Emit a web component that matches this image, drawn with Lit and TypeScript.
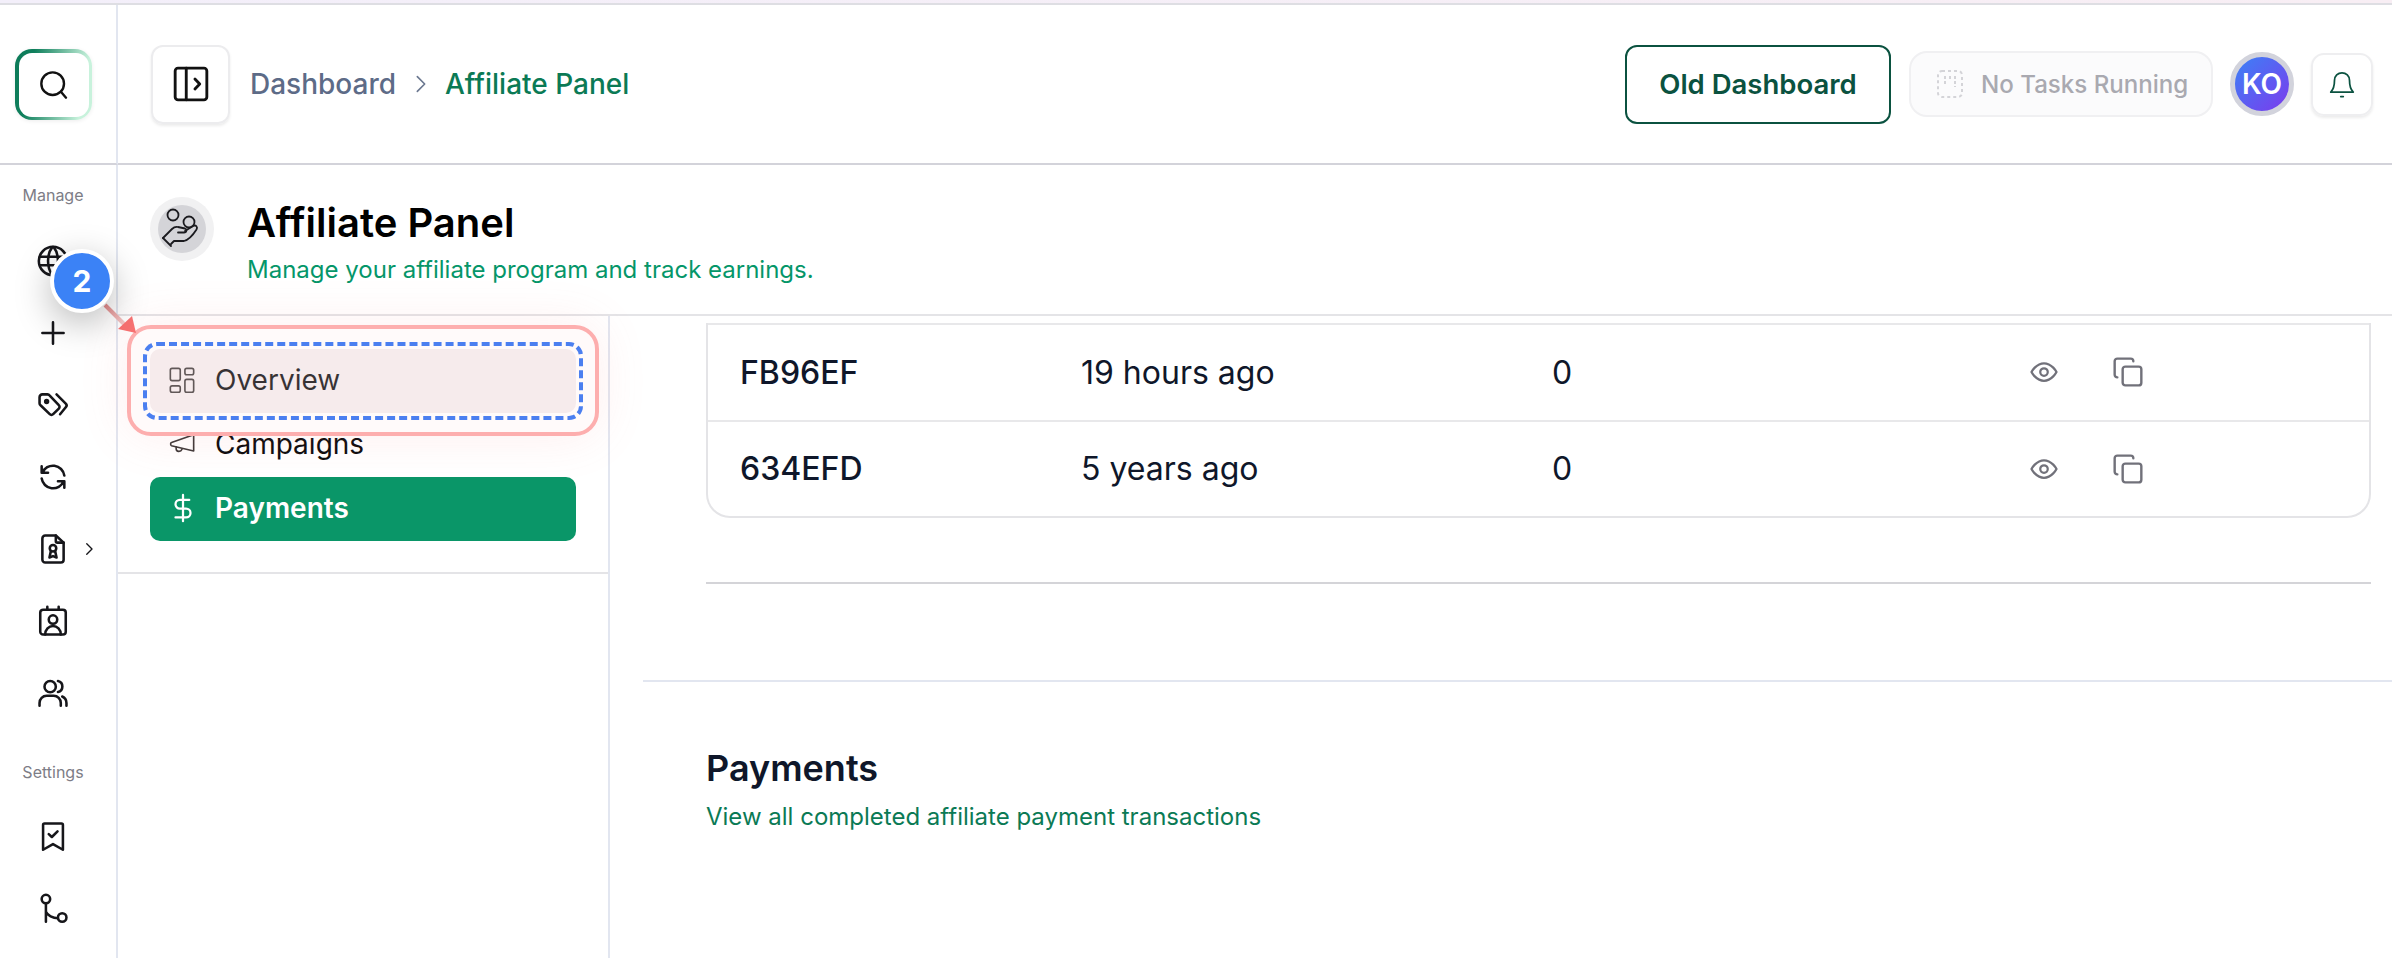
import { LitElement, html, css, svg } from "lit";
import { customElement } from "lit/decorators.js";

const ic = (body: unknown, size = 34, cls = "") => html`<svg class="ic ${cls}" width=${size} height=${size} viewBox="0 0 24 24" fill="none" stroke="currentColor" stroke-width="1.8" stroke-linecap="round" stroke-linejoin="round">${body}</svg>`;

const rail1 = [
  svg`<circle cx="12" cy="12" r="10"/><path d="M2.800 9h18.400M2.800 15h18.400M11.500 2.200c-4 5-4 14.600 0 19.600M12.500 2.200c4 5 4 14.600 0 19.600"/>`,
  svg`<path d="M12 4.500v15M4.500 12h15"/>`,
  svg`<circle cx="7.500" cy="9.500" r="1"/><path d="M2.500 6.500v4.200c0 .6.2 1.100.7 1.500l6.500 6.300c.7.7 1.700.7 2.400 0l4-4c.7-.7.7-1.700 0-2.400L9.700 5.300C9.300 4.800 8.700 4.500 8.100 4.500H4.500c-1.100 0-2 .9-2 2z"/><path d="M14.500 4.500l6.500 6.500c.8.800.8 1.800 0 2.600L17 18.500"/>`,
  svg`<path d="M20 11A8.100 8.100 0 0 0 4.500 9M4 4.500V9h4.500"/><path d="M4 13a8.100 8.100 0 0 0 15.500 2m.5 4.500V15h-4.500"/>`,
  svg`<path d="M14 2.500v4a1 1 0 0 0 1 1h4.500"/><path d="M17.500 21.500h-11a2 2 0 0 1-2-2v-15a2 2 0 0 1 2-2H14l5.500 5v12a2 2 0 0 1-2 2z"/><circle cx="12" cy="11.500" r="2.300"/><path d="M10.500 13.500l-1 4.500 2.500-1 2.500 1-1-4.500"/>`,
  svg`<rect x="3" y="4" width="18" height="17.500" rx="2"/><path d="M8 2v2M16 2v2"/><circle cx="12" cy="11" r="3"/><path d="M6.500 21.500c0-3.500 2.500-6 5.500-6s5.500 2.500 5.500 6"/>`,
  svg`<circle cx="10" cy="7.500" r="4"/><path d="M2.500 21v-2a5 5 0 0 1 5-5h5a5 5 0 0 1 5 5v2M15.500 3.500a4 4 0 0 1 0 7.800M21.500 21v-2a5 5 0 0 0-3-4.500"/>`,
];
const rail2 = [
  svg`<path d="M6 2.500h12a1 1 0 0 1 1 1v17.500l-7-4-7 4V3.500a1 1 0 0 1 1-1z"/><path d="M9 10l2.200 2 4-4"/>`,
  svg`<circle cx="7" cy="5" r="3"/><path d="M7 8v13M7 14c1 2.500 5 4.500 8.500 4.500"/><circle cx="18.500" cy="18" r="3"/>`,
];
const rows = [
  { code: "FB96EF", when: "19 hours ago", n: "0" },
  { code: "634EFD", when: "5 years ago", n: "0" },
];

@customElement("app-root")
export class AppRoot extends LitElement {
  static styles = css`
    :host { display: block; position: relative; width: 2392px; height: 958px; overflow: hidden; background: #fff; font-family: Inter, "Liberation Sans", sans-serif; color: #111; }
    * { box-sizing: border-box; }
    .strip { height: 5px; background: linear-gradient(90deg, #f3effa, #f8eef4); border-bottom: 2px solid #dedee3; }
    .grid { display: grid; grid-template-columns: 118px 1fr; grid-template-rows: 160px 793px; }
    .rail-top { border-right: 2px solid #e2e6f0; border-bottom: 2px solid #d3d3da; display: flex; align-items: center; justify-content: center; padding: 1px 10px 0 0; }
    .search { width: 77px; height: 71px; border-radius: 17px; padding: 4px 3px 3px 4px; background: linear-gradient(100deg, #0c7a58, #0f7f5c 22%, #c8f2dc 85%); box-shadow: 0 1px 4px rgba(0,0,0,.08); }
    .search div { width: 100%; height: 100%; border-radius: 13px; background: #fff; display: flex; align-items: center; justify-content: center; }
    .top { border-bottom: 2px solid #d3d3da; display: flex; align-items: center; padding: 0 19px 0 33px; }
    .toggle { width: 79px; height: 79px; border: 2px solid #ececee; border-radius: 12px; box-shadow: 0 2px 3px rgba(0,0,0,.08); display: flex; align-items: center; justify-content: center; margin-right: 20px; }
    .crumb { font-size: 28px; font-weight: 500; color: #5d6b87; }
    .crumb.cur { color: #0b7a55; }
    .sep { margin: 0 13px 0 14px; color: #6b7890; display: flex; }
    .spacer { flex: 1; }
    .old { width: 266px; height: 79px; border: 2px solid #0b5240; border-radius: 12px; color: #0b5240; font-size: 27.500px; font-weight: 600; display: flex; align-items: center; justify-content: center; margin-right: 18px; }
    .tasks { width: 304px; height: 66px; border: 2px solid #f0f0f2; border-radius: 18px; background: #fbfbfc; color: #a9a9b0; font-size: 24.100px; font-weight: 500; display: flex; align-items: center; padding-left: 26px; gap: 18px; margin-right: 17px; }
    .avatar { width: 64px; height: 64px; border-radius: 50%; border: 5px solid #d2d3dc; background: linear-gradient(135deg, #3b82f6, #7c3aed); color: #fff; font-size: 28px; font-weight: 600; display: flex; align-items: center; justify-content: center; margin-right: 17px; }
    .bell { width: 62px; height: 63px; border: 2px solid #eeeef0; border-radius: 13px; box-shadow: 0 2px 3px rgba(0,0,0,.08); display: flex; align-items: center; justify-content: center; color: #0b5240; }
    .bell svg { stroke-width: 1.4; }
    .rail { border-right: 2px solid #e2e6f0; padding: 18px 10px 0 0; display: flex; flex-direction: column; align-items: stretch; color: #16161a; }
    .lab { height: 24px; line-height: 24px; font-size: 16px; color: #7d7d86; text-align: center; margin-bottom: 18px; }
    .lab.s2 { margin-top: 31px; margin-bottom: 17px; }
    .ri { height: 72px; display: flex; align-items: center; justify-content: center; position: relative; }
    .ri .more { position: absolute; left: 80px; top: 27px; }
    .body { display: flex; flex-direction: column; min-width: 0; }
    .phead { height: 151px; border-bottom: 2px solid #e4e4e7; display: flex; padding: 32px 0 0 32px; flex: none; }
    .pic { width: 64px; height: 64px; border-radius: 50%; background: #f1f1f2; display: flex; align-items: center; justify-content: center; margin-right: 33px; }
    .pic div { width: 48px; height: 48px; border-radius: 50%; background: #d4d4d8; display: flex; align-items: center; justify-content: center; }
    .ptxt { padding-top: 2px; }
    h1 { margin: 0; font-size: 40px; line-height: 48px; font-weight: 600; color: #000; }
    .psub { font-size: 24px; line-height: 30px; color: #059669; margin-top: 8px; }
    .cols { flex: 1; display: flex; min-height: 0; }
    .sub { width: 492px; flex: none; border-right: 2px solid #e2e6f0; }
    .nav { height: 258px; border-bottom: 2px solid #e4e4e7; padding: 33px 32px 0 32px; }
    .ni { height: 64px; border-radius: 10px; display: flex; align-items: center; padding: 0 0 2px 18px; font-size: 28px; color: #0c0c0e; }
    .ni svg { margin-right: 19px; flex: none; color: #3f3a3a; stroke-width: 1.4; }
    .ni.hov { background: #f5edee; }
    .ni.act { background: #0a9668; color: #fff; font-weight: 600; }
    .ni.act svg { color: #fff; margin-right: 17px; stroke-width: 1.8; }
    .main { flex: 1; min-width: 0; padding: 7px 0 0 33px; }
    .tbl { margin-left: 63px; margin-right: 21px; border: 2px solid #e4e4e7; border-top: 0; border-radius: 0 0 24px 24px; height: 195px; }
    .row { height: 96.500px; display: grid; grid-template-columns: 341px 471px 477px 1fr; align-items: center; padding-left: 32px; border-top: 2px solid #e8e8ea; font-size: 32px; font-weight: 400; color: #0f172a; }
    .row .code { font-weight: 500; }
    .acts { display: flex; align-items: center; gap: 53px; color: #71717a; }
    .rule { height: 2px; background: #d4d4d8; margin: 64px 21px 0 63px; }
    .rule2 { height: 2px; background: #e2e6f0; margin-top: 96px; }
    .pay { padding: 64px 0 0 63px; }
    h2 { margin: 0; font-size: 36px; line-height: 44px; font-weight: 600; color: #0f172a; }
    .paysub { font-size: 24px; line-height: 30px; color: #0b7a55; margin-top: 12px; }
    .hl { position: absolute; left: 127px; top: 325px; width: 472px; height: 111px; border: 4px solid #fdaeae; border-radius: 24px; background: rgba(254,226,226,.18); box-shadow: 0 0 50px rgba(248,113,113,.12); }
    .dash { position: absolute; left: 143px; top: 342px; width: 440px; height: 78px; border: 4px dashed #4b7ff0; border-radius: 14px; }
    .arrow { position: absolute; left: 100px; top: 300px; width: 40px; height: 40px; overflow: visible; }
    .badge { position: absolute; left: 50px; top: 249px; width: 64px; height: 64px; border-radius: 50%; border: 4px solid #fff; background: #3b82f6; color: #fff; font-size: 30px; font-weight: 700; display: flex; align-items: center; justify-content: center; box-shadow: 0 10px 36px rgba(0,0,0,.28); }
  `;

  render() {
    return html`
      <div class="strip"></div>
      <div class="grid">
        <div class="rail-top"><div class="search"><div>${ic(svg`<circle cx="11" cy="11" r="8.500"/><path d="M17.500 17.500L21 21.500"/>`, 32)}</div></div></div>
        <header class="top">
          <div class="toggle">${ic(svg`<rect x="2" y="2" width="20" height="20" rx="1.800"/><path d="M9 2v20M14.500 8.800l3 3.200-3 3.200"/>`, 38)}</div>
          <span class="crumb">Dashboard</span>
          <span class="sep">${ic(svg`<path d="M8 4l8 8-8 8"/>`, 22)}</span>
          <span class="crumb cur">Affiliate Panel</span>
          <span class="spacer"></span>
          <div class="old">Old Dashboard</div>
          <div class="tasks">
            <svg width="26" height="28" viewBox="0 0 26 28" fill="none" stroke="#d4d4d8" stroke-width="2"><rect x="1" y="1" width="24" height="26" rx="4" stroke-dasharray="3 3"/><path d="M8 6v8M13 6v5M18 6v11" stroke-dasharray="3 2"/></svg>
            No Tasks Running
          </div>
          <div class="avatar">KO</div>
          <div class="bell">${ic(svg`<path d="M12 3a6 6 0 0 1 6 6c0 5 1 7.500 3 9.500H3c2-2 3-4.500 3-9.500a6 6 0 0 1 6-6z"/><path d="M11 22h2"/>`, 30)}</div>
        </header>
        <nav class="rail">
          <div class="lab">Manage</div>
          ${rail1.map((b, i) => html`<div class="ri">${ic(b)}${i === 4 ? html`<span class="more">${ic(svg`<path d="M9 5l7 7-7 7"/>`, 18)}</span>` : ""}</div>`)}
          <div class="lab s2">Settings</div>
          ${rail2.map((b) => html`<div class="ri">${ic(b)}</div>`)}
        </nav>
        <div class="body">
          <div class="phead">
            <div class="pic"><div>
              <svg width="44" height="44" viewBox="0 0 44 44" fill="none" stroke="#1a1a1e" stroke-width="1.800" stroke-linecap="round" stroke-linejoin="round">
                <circle cx="13" cy="8" r="5.500"/><circle cx="29" cy="15" r="5.500"/>
                <path d="M3 31l9-9c2-2 4-2.500 6-2l7 1.500c2 .5 2 4-1 4h-6"/><path d="M25 24l8-5c3-1.500 5 1 3.500 3.500C33 28 28 33 24 34H14l-3 3"/><path d="M3 31l8 8"/>
              </svg>
            </div></div>
            <div class="ptxt">
              <h1>Affiliate Panel</h1>
              <div class="psub">Manage your affiliate program and track earnings.</div>
            </div>
          </div>
          <div class="cols">
            <div class="sub">
              <div class="nav">
                <div class="ni hov">${ic(svg`<rect x="2" y="2" width="8.500" height="10.500" rx="1.500"/><rect x="14.500" y="2" width="7.500" height="5.500" rx="1.500"/><rect x="2" y="17" width="8.500" height="5.500" rx="1.500"/><rect x="14.500" y="11.500" width="7.500" height="11" rx="1.500"/>`, 28)}Overview</div>
                <div class="ni">${ic(svg`<path d="M22 4v14L3 13.500c-1-.3-1-2.500 0-2.800z"/><path d="M7 14.500v1.500c0 3 4 3 5 .5"/>`, 28)}Campaigns</div>
                <div class="ni act">${ic(svg`<path d="M12 1.500v21M17 5.500H9.500a3.500 3.500 0 0 0 0 7h5a3.500 3.500 0 0 1 0 7H6"/>`, 30)}Payments</div>
              </div>
            </div>
            <main class="main">
              <div class="tbl">
                ${rows.map((r) => html`<div class="row">
                  <span class="code">${r.code}</span><span>${r.when}</span><span>${r.n}</span>
                  <span class="acts">
                    ${ic(svg`<path d="M2 12s3.600-7 10-7 10 7 10 7-3.600 7-10 7-10-7-10-7z"/><circle cx="12" cy="12" r="3"/>`, 30)}
                    ${ic(svg`<rect x="8" y="8" width="14" height="14" rx="2"/><path d="M4 16c-1.100 0-2-.9-2-2V4c0-1.100.9-2 2-2h10c1.100 0 2 .9 2 2"/>`, 32)}
                  </span>
                </div>`)}
              </div>
              <div class="rule"></div>
              <div class="rule2"></div>
              <section class="pay">
                <h2>Payments</h2>
                <div class="paysub">View all completed affiliate payment transactions</div>
              </section>
            </main>
          </div>
        </div>
      </div>
      <div class="hl"></div>
      <div class="dash"></div>
      <svg class="arrow" viewBox="0 0 40 40">
        <defs><linearGradient id="al" x1="0" y1="0" x2="1" y2="1"><stop offset="0" stop-color="#e58c8c"/><stop offset="1" stop-color="#f3c9c9"/></linearGradient></defs>
        <path d="M5 5L24 24" stroke="url(#al)" stroke-width="4"/>
        <path d="M18 29L32 16L36 33z" fill="#f87171"/>
      </svg>
      <div class="badge">2</div>
    `;
  }
}
